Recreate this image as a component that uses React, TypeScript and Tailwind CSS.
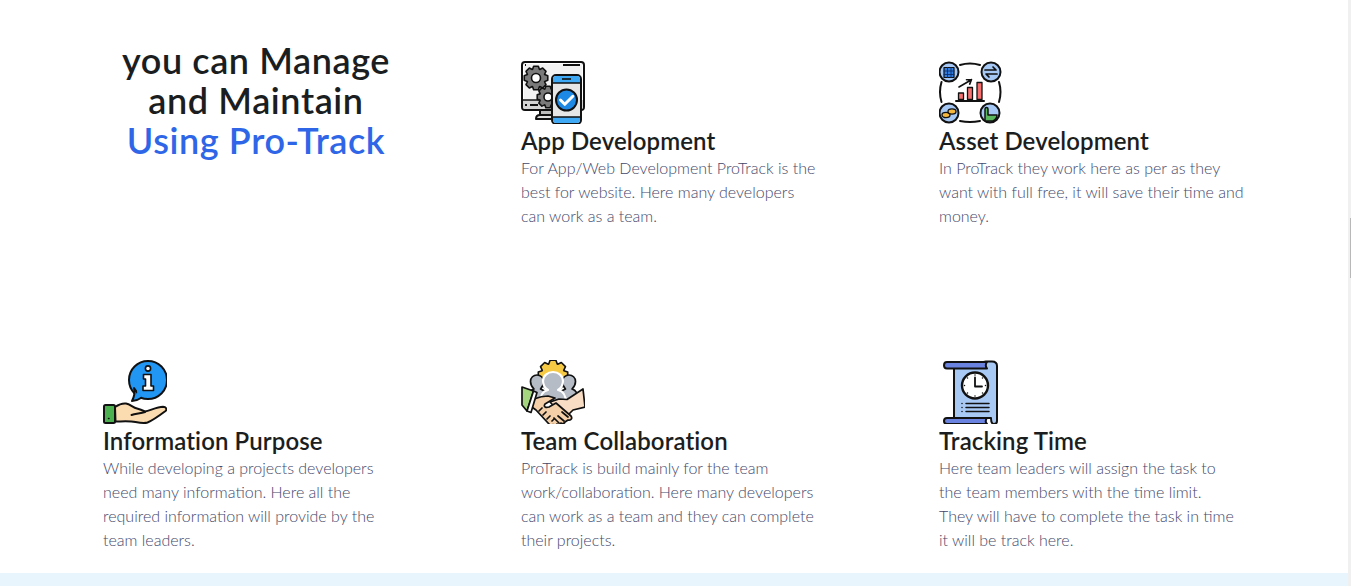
const Gear = ({ cx, cy, r, teeth = 8, fill }: { cx: number; cy: number; r: number; teeth?: number; fill: string }) => {
  const pts: string[] = [];
  for (let i = 0; i < teeth; i++) {
    const a = (i / teeth) * Math.PI * 2;
    const s = Math.PI / teeth;
    [[r * 0.78, -s * 0.95], [r, -s * 0.5], [r, s * 0.5], [r * 0.78, s * 0.95]].forEach(([rad, d]) => {
      pts.push(`${(cx + rad * Math.cos(a + d)).toFixed(2)},${(cy + rad * Math.sin(a + d)).toFixed(2)}`);
    });
  }
  return <polygon points={pts.join(" ")} fill={fill} stroke="#111" strokeWidth="1.6" strokeLinejoin="round" />;
};

function AppIcon() {
  return (
    <svg viewBox="0 0 64 64" className="h-16 w-16" fill="none" stroke="#111" strokeWidth="2" strokeLinejoin="round">
      <path d="M19 50h14v5H19z" fill="#bdbdbd" />
      <path d="M15 59c0-3 2-4 4-4h14v4z" fill="#e0e0e0" />
      <rect x="1" y="2" width="62" height="48" rx="3" fill="#fff" />
      <rect x="3" y="4" width="58" height="35" fill="#f2f2f2" stroke="none" />
      <path d="M2 40h60v7a2 2 0 0 1-2 2H4a2 2 0 0 1-2-2z" fill="#d4d4d4" stroke="none" />
      <path d="M2 40h32" strokeWidth="1.500" />
      <path d="M4 45h2M9 45h8" strokeWidth="1.800" />
      <path d="M42 5h17M4 5h1" strokeWidth="1.800" />
      <Gear cx={15} cy={18} r={12} fill="#7a7a7a" />
      <circle cx="15" cy="18" r="4.500" fill="#fff" strokeWidth="1.600" />
      <Gear cx={27} cy={37} r={11} fill="#7a7a7a" />
      <circle cx="27" cy="37" r="4" fill="#fff" strokeWidth="1.600" />
      <rect x="31" y="15" width="29" height="49" rx="4" fill="#e6e6e6" />
      <path d="M32 23v-4a3 3 0 0 1 3-3h21a3 3 0 0 1 3 3v4z" fill="#3fa9f5" stroke="none" />
      <path d="M32 57v3a3 3 0 0 0 3 3h21a3 3 0 0 0 3-3v-3z" fill="#3fa9f5" stroke="none" />
      <path d="M32 23h27M32 57h27" strokeWidth="1.400" />
      <path d="M41 19h9" strokeWidth="1.600" />
      <circle cx="45.500" cy="40" r="10.500" fill="#1e88e5" />
      <path d="M39.500 40l4.300 4.300 8-8" stroke="#fff" strokeWidth="3" strokeLinecap="round" />
    </svg>
  );
}

function AssetIcon() {
  return (
    <svg viewBox="0 0 64 64" className="h-16 w-16" fill="none" stroke="#111" strokeWidth="2" strokeLinecap="round" strokeLinejoin="round">
      <path d="M21 5q10-3 20 0M2.500 22q-3 10 0 20M60 22q3 10 0 20M21 61q10 2 20 0" />
      <circle cx="10" cy="12" r="9.500" fill="#a6c8f5" />
      <circle cx="52" cy="12" r="9.500" fill="#a6c8f5" />
      <circle cx="10" cy="53" r="9.500" fill="#a6c8f5" />
      <circle cx="51" cy="53" r="9.500" fill="#a6c8f5" />
      <rect x="5" y="7.500" width="10" height="10" fill="#2f7de1" strokeWidth="1.200" />
      <path d="M5 11h10M5 14.500h10M8.500 7.500v10M12 7.500v10" stroke="#0d2f6b" strokeWidth="0.900" />
      <path d="M46 10h11l-3-3M58 14H47l3 3" strokeWidth="1.700" />
      <ellipse cx="7" cy="55" rx="4" ry="2.600" fill="#f5b83d" strokeWidth="1.300" />
      <ellipse cx="13" cy="51.500" rx="4" ry="2.600" fill="#f5b83d" strokeWidth="1.300" />
      <path d="M46 61V49c0-2 3-2 3 0v6h9c0 3-2 5-4 6z" fill="#5cb85c" strokeWidth="1.500" />
      <path d="M20 27l12-7M32.500 19.500l-5 .3M32.500 19.500l-1.800 4.600" strokeWidth="1.600" />
      <rect x="19.500" y="33" width="5" height="6.500" fill="#f87171" strokeWidth="1.300" />
      <rect x="28.500" y="27.500" width="5" height="12" fill="#f87171" strokeWidth="1.300" />
      <rect x="38" y="22.500" width="5" height="17" fill="#f87171" strokeWidth="1.300" />
      <path d="M17 41h28" />
    </svg>
  );
}

function InfoIcon() {
  return (
    <svg viewBox="0 0 64 64" className="h-16 w-16" fill="none" stroke="#111" strokeWidth="2" strokeLinejoin="round" strokeLinecap="round">
      <circle cx="45" cy="20" r="19" fill="#2196f3" />
      <path d="M31 28c1 3 .5 8-2 13 3 0 6-1 9-3z" fill="#2196f3" />
      <path d="M33.500 27.500c1 3 1 7-1 11 2 0 4-.7 6-2z" fill="#2196f3" stroke="none" />
      <circle cx="45" cy="8.500" r="2.600" fill="#fff" strokeWidth="1.600" />
      <path d="M40.500 14.500H48V26h2.500v4.500H40V26h2.500v-7h-2z" fill="#fff" strokeWidth="1.600" />
      <path d="M12 47c3-2 7-4 11-3.500 4 .5 7 4 11 5 3 .7 6 2 8 3 5-1 12-4.500 18-4.700 3 0 4.500 2.500 2.500 4.200-6 4.500-12 9-18 11.500-3 1-7 .5-12-.5-6-1.200-14-.5-20-.5z" fill="#fbdcb0" />
      <path d="M28.500 55c4-1.500 9-1.500 13.500-3" />
      <rect x="1" y="45" width="11" height="18" rx="1.500" fill="#4caf50" />
      <path d="M5.500 58.500h.5" strokeWidth="1.500" />
    </svg>
  );
}

function TeamIcon() {
  return (
    <svg viewBox="0 0 64 64" className="h-16 w-16" fill="none" stroke="#111" strokeWidth="1.700" strokeLinejoin="round" strokeLinecap="round">
      <Gear cx={32} cy={15} r={15} teeth={8} fill="#f6c945" />
      <path d="M7 40c0-7 2-10 6-11-2-2-3.500-4-3.500-7.500 0-4 3-6.500 6.500-6.500s6.500 2.500 6.500 6.500c0 3-1 5.500-3 7.500l6 3v8z" fill="#b5bcc6" />
      <path d="M57 40c0-7-2-10-6-11 2-2 3.500-4 3.500-7.500 0-4-3-6.500-6.500-6.500s-6.500 2.500-6.500 6.500c0 3 1 5.500 3 7.500l-6 3v8z" fill="#b5bcc6" />
      <path d="M19 43c0-9 3-12 8-13-3-2-5-5-5-9 0-5 4.500-9 10-9s10 4 10 9c0 4-2 7-5 9 5 1 8 4 8 13z" fill="#b5bcc6" stroke="#fff" strokeWidth="2.200" />
      <path d="M62 29l2 18-12 3-8 8-15-16 9-3 8 .5z" fill="#f9dcc4" />
      <path d="M13 39c5-2 9-3 14-3l7 2-10 6c-2 3 1 4 4 3l7-4 15 13c2 3-1 4.500-3 4l-3 2c-1 2-3 2-4 1-1 2-3 2-4 1-1 1.500-3 1.500-4 .5-1 1-3 1-4-.5L15 50 8 45z" fill="#f5cfa8" />
      <path d="M47 57l-6-5M43 61l-6-5M38 63l-5-5M21 48l-3 3M25 52l-3 3M29 56l-3 3M33 59l-2 2" />
      <path d="M1 27l11.500 4-6.500 20-5-6z" fill="#a5d57f" />
      <path d="M12.500 31l3.500 1.500-6 20-4-1.500z" fill="#fff" />
    </svg>
  );
}

function TimeIcon() {
  return (
    <svg viewBox="0 0 64 64" className="h-16 w-16" fill="none" stroke="#111" strokeWidth="2" strokeLinejoin="round" strokeLinecap="round">
      <path d="M15 8V58h37c0 3 1 6 3 6 2 0 3-1 3-3V6c0-3-2-4.500-5-4.500H47z" fill="#a9c9f5" />
      <path d="M8 2h40c-1.500 2-1.500 4.500 0 6.500H8c-4 0-4-6.500 0-6.500z" fill="#6b83e0" />
      <path d="M8 58h40c-1.500 2-1.500 4.500 0 6H8c-4 0-4-6 0-6z" fill="#6b83e0" />
      <circle cx="36" cy="25.500" r="13" fill="#fff" strokeWidth="2.400" />
      <path d="M36 17.500v9h7" strokeWidth="1.800" />
      <path d="M36 15v.01M36 36v.01M25.500 25.500h.01M46.500 25.500h.01M28.500 18h.01M43.500 18h.01M28.500 33h.01M43.500 33h.01" strokeWidth="1.500" />
      <path d="M27 43.500h23M27 47.500h23M27 51.500h23" strokeWidth="1.500" />
      <path d="M23 43.500h.01M23 47.500h.01M23 51.500h.01" strokeWidth="1.500" />
    </svg>
  );
}

const features = [
  { icon: <AppIcon />, title: "App Development", lines: ["For App/Web Development ProTrack is the", "best for website. Here many developers", "can work as a team."] },
  { icon: <AssetIcon />, title: "Asset Development", lines: ["In ProTrack they work here as per as they", "want with full free, it will save their time and", "money."] },
  { icon: <InfoIcon />, title: "Information Purpose", lines: ["While developing a projects developers", "need many information. Here all the", "required information will provide by the", "team leaders."] },
  { icon: <TeamIcon />, title: "Team Collaboration", lines: ["ProTrack is build mainly for the team", "work/collaboration. Here many developers", "can work as a team and they can complete", "their projects."] },
  { icon: <TimeIcon />, title: "Tracking Time", lines: ["Here team leaders will assign the task to", "the team members with the time limit.", "They will have to complete the task in time", "it will be track here."] },
];

function Feature({ icon, title, lines }: { icon: React.ReactNode; title: string; lines: string[] }) {
  return (
    <div className="pt-5">
      {icon}
      <h3 className="mt-px text-2xl leading-8 font-semibold tracking-[0.1px] text-[#1b1e20]">{title}</h3>
      <p className="-mt-px text-base leading-6 font-light text-[#44486a]">
        {lines.map((line) => (
          <span key={line} className="block whitespace-nowrap">{line}</span>
        ))}
      </p>
    </div>
  );
}

export default function App() {
  return (
    <div className="flex h-[586px] overflow-hidden bg-white font-['Lato',sans-serif]">
      <main className="flex min-w-0 flex-1 flex-col">
        <section className="grid h-[573px] grid-cols-[418px_418px_1fr] grid-rows-[300px_1fr] pt-10 pl-[103px]">
          <h2 className="w-[306px] text-center text-4xl leading-10 font-semibold tracking-[0.6px] text-[#1b1e20]">
            you can Manage
            <br />
            and Maintain
            <br />
            <span className="text-[#2f66e8]">Using Pro-Track</span>
          </h2>
          {features.map((f) => (
            <Feature key={f.title} {...f} />
          ))}
        </section>
        <div className="flex-1 bg-[#e8f5fc]" />
      </main>
      <aside className="w-[3px] bg-[#f0f0f0] pt-[218px] pl-[2px]">
        <div className="h-[60px] w-px bg-[#b8b8b8]" />
      </aside>
    </div>
  );
}
